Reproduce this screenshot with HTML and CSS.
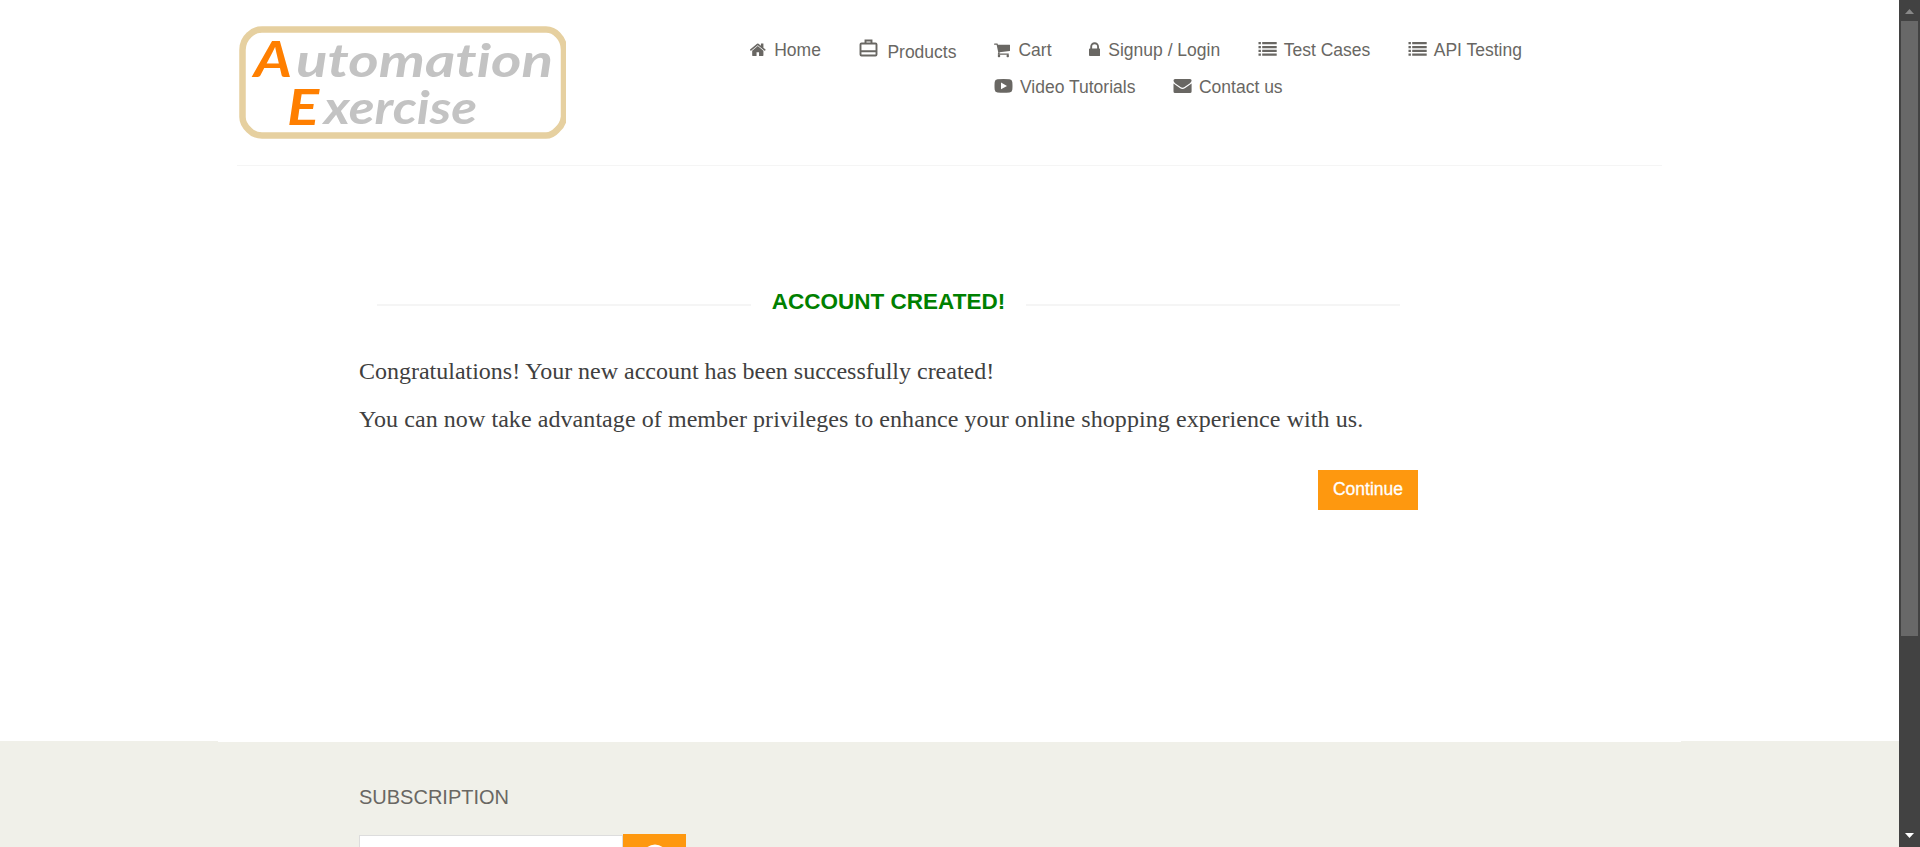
FILE: index.html
```html
<!DOCTYPE html>
<html lang="en">
<head>
<meta charset="utf-8">
<title>Automation Exercise - Account Created</title>
<link rel="stylesheet" href="styles.css">
</head>
<body>
<div class="page">
  <header class="header">
    <svg class="logo" width="329" height="115" viewBox="0 0 329 115" role="img" aria-label="Automation Exercise">
      <path class="logo-frame" d="M25 4.500H309Q316 4.500 321 10Q327 16 327 25V92Q326 100 320 105Q315 110.500 309 110.500H25Q17 110.500 12 105Q5.500 99 5.500 92V25Q5.500 16 12 10Q17 4.500 25 4.500Z"/>
      <text class="logo-cap" x="17" y="52" textLength="38" lengthAdjust="spacingAndGlyphs">A</text>
      <text class="logo-text" x="59" y="52" textLength="257" lengthAdjust="spacingAndGlyphs">utomation</text>
      <text class="logo-cap" x="50" y="100" textLength="32" lengthAdjust="spacingAndGlyphs">E</text>
      <text class="logo-text" x="87" y="99" textLength="153" lengthAdjust="spacingAndGlyphs">xercise</text>
    </svg>
    <nav class="nav">
      <ul class="nav-row">
        <li><svg class="fa home" viewBox="96 0 1600 1792"><path d="M1472 992v480q0 26-19 45t-45 19h-384v-384h-256v384h-384q-26 0-45-19t-19-45v-480q0-1 .5-3t.5-3l575-474 575 474q1 2 1 6zm223-69l-62 74q-8 9-21 11h-3q-13 0-21-7l-692-577-692 577q-12 8-24 7-13-2-21-11l-62-74q-8-10-7-23.500t11-21.500l719-599q32-26 76-26t76 26l244 204v-195q0-14 9-23t23-9h192q14 0 23 9t9 23v408l219 182q10 8 11 21.500t-7 23.500z"/></svg>Home</li>
        <li class="products"><svg class="bag" viewBox="0 0 21 20"><path d="M3.500 5.500h14a1 1 0 0 1 1 1v10a1 1 0 0 1-1 1h-14a1 1 0 0 1-1-1v-10a1 1 0 0 1 1-1zM7.500 5.500v-3h6v3M2.500 13.200h16"/></svg>Products</li>
        <li><svg class="fa cart" viewBox="64 0 1664 1792"><path d="M704 1536q0 52-38 90t-90 38-90-38-38-90 38-90 90-38 90 38 38 90zm896 0q0 52-38 90t-90 38-90-38-38-90 38-90 90-38 90 38 38 90zm128-1088v512q0 24-16.500 42.500t-40.500 21.500l-1044 122q13 60 13 70 0 16-24 64h920q26 0 45 19t19 45-19 45-45 19h-1024q-26 0-45-19t-19-45q0-11 8-31.500t16-36 21.500-40 15.500-29.500l-177-823h-204q-26 0-45-19t-19-45 19-45 45-19h256q16 0 28.500 6.500t19.500 15.500 13 24.500 8 26 5.500 29.500 4.500 26h1201q26 0 45 19t19 45z"/></svg>Cart</li>
        <li><svg class="fa lock" viewBox="320 0 1152 1792"><path d="M640 768h512v-192q0-106-75-181t-181-75-181 75-75 181v192zm832 96v576q0 40-28 68t-68 28h-960q-40 0-68-28t-28-68v-576q0-40 28-68t68-28h32v-192q0-184 132-316t316-132 316 132 132 316v192h32q40 0 68 28t28 68z"/></svg>Signup / Login</li>
        <li><svg class="wide" viewBox="0 0 19 14"><path d="M.5 0h2.400v2.300H.5zM.5 3.900h2.400v2.300H.5zM.5 7.700h2.400v2.300H.5zM.5 11.500h2.400v2.300H.5zM4.200 0H18.700v2.300H4.200zM4.200 3.900H18.700v2.300H4.200zM4.200 7.700H18.700v2.300H4.200zM4.200 11.500H18.700v2.300H4.200z"/></svg>Test Cases</li>
        <li><svg class="wide" viewBox="0 0 19 14"><path d="M.5 0h2.400v2.300H.5zM.5 3.900h2.400v2.300H.5zM.5 7.700h2.400v2.300H.5zM.5 11.500h2.400v2.300H.5zM4.200 0H18.700v2.300H4.200zM4.200 3.900H18.700v2.300H4.200zM4.200 7.700H18.700v2.300H4.200zM4.200 11.500H18.700v2.300H4.200z"/></svg>API Testing</li>
      </ul>
      <ul class="nav-row second">
        <li><svg class="wide" viewBox="0 0 19 14"><path fill-rule="evenodd" d="M3.500.3Q9.500-.2 15.500.3Q18 .5 18.300 3Q18.700 7 18.300 10.800Q18 13.300 15.500 13.500Q9.500 14 3.500 13.500Q1 13.300.7 10.800Q.3 7 .7 3Q1 .5 3.500.3ZM7 3.500V10.200L13 6.900Z"/></svg>Video Tutorials</li>
        <li><svg class="wide" viewBox="0 0 19 14"><path d="M2 0H17Q18.600 0 18.600 1.600Q18.600 3 17 4.200L11.500 8Q9.500 9.300 7.500 8L2 4.200Q.5 3 .5 1.600Q.5 0 2 0ZM.5 4.500L6.800 9Q9.500 10.800 12.200 9L18.600 4.500V12.400Q18.600 14 17 14H2Q.5 14 .5 12.400Z"/></svg>Contact us</li>
      </ul>
    </nav>
  </header>

  <main class="main">
    <h2 class="title"><span class="rule"></span><b>ACCOUNT CREATED!</b><span class="rule"></span></h2>
    <p class="message first">Congratulations! Your new account has been successfully created!</p>
    <p class="message second">You can now take advantage of member privileges to enhance your online shopping experience with us.</p>
    <div class="actions"><a class="continue">Continue</a></div>
  </main>

  <footer class="footer">
    <div class="footer-top"></div>
    <h2 class="subscription">SUBSCRIPTION</h2>
    <div class="form">
      <div class="email"></div>
      <div class="send"><svg viewBox="0 0 30 30"><circle cx="15" cy="15" r="10.500"/><path d="M9 15h11M15 10l5 5-5 5"/></svg></div>
    </div>
  </footer>
</div>
<div class="scrollbar">
  <svg class="arrow up" viewBox="0 0 9 5"><path d="M0 5h9L4.500 0z"/></svg>
  <div class="thumb"></div>
  <svg class="arrow down" viewBox="0 0 9 5"><path d="M0 0h9L4.500 5z"/></svg>
</div>
</body>
</html>
```
FILE: styles.css
```css
* { box-sizing: border-box; }

body {
  margin: 0;
  height: 847px;
  overflow: hidden;
  display: flex;
  background: #fff;
  color: #696763;
  font: 17.5px/20px "Liberation Sans", Arial, sans-serif;
}

.page {
  width: 1899px;
  height: 847px;
  overflow: hidden;
  display: flex;
  flex-direction: column;
}

/* Header */
.header {
  width: 1425px;
  height: 166px;
  margin-left: 237px;
  flex: none;
  display: flex;
  border-bottom: 1px solid #f5f5f5;
}

.logo { margin: 25px 184px 0 0; flex: none; overflow: hidden; }
.logo-frame { fill: none; stroke: #e6d0a0; stroke-width: 6.5; }
.logo-cap, .logo-text {
  font-family: Lato, "Liberation Sans", sans-serif;
  font-style: italic;
  font-weight: 700;
  font-variant-ligatures: none;
}
.logo-cap { font-size: 50px; fill: #ff7f00; }
.logo-text { font-size: 45px; fill: #c3c3c3; }

.nav { padding-top: 40px; }
.nav-row {
  display: flex;
  gap: 37.5px;
  margin: 0;
  padding: 0;
  list-style: none;
  white-space: nowrap;
}
.nav-row.second { margin-top: 15px; padding-left: 244px; }
.nav-row svg { fill: #696763; }
.products { padding-top: 2px; }

.fa { height: 17.5px; vertical-align: -2.5px; margin-right: 8px; }
.home { width: 15.6px; margin-right: 8.6px; }
.cart { width: 16.25px; margin-right: 8.3px; }
.lock { width: 11.25px; margin-right: 8px; }
.wide { width: 19px; height: 14px; vertical-align: 0; margin-right: 7px; }
.nav-row .bag {
  width: 21px;
  height: 20px;
  vertical-align: 0;
  margin: -4px 8px 0 0;
  fill: none;
  stroke: #696763;
  stroke-width: 1.9;
}

/* Message */
.main {
  width: 1059px;
  height: 575px;
  flex: none;
  margin-left: 359px;
  padding-top: 122px;
}
.title {
  display: flex;
  width: 1023px;
  margin: 0 0 0 18px;
  color: green;
  font-size: 22.5px;
  line-height: 28px;
  justify-content: space-between;
}
.rule { width: 374px; height: 2px; margin-top: 16px; background: #f5f5f5; }

.message {
  margin: 0;
  color: #404040;
  font: 24px/28px "Liberation Serif", serif;
  white-space: nowrap;
}
.message.first { margin-top: 41px; letter-spacing: -0.01px; }
.message.second { margin-top: 20px; letter-spacing: 0.07px; }

.actions { display: flex; justify-content: flex-end; margin-top: 37px; }
.continue {
  width: 100px;
  height: 40px;
  padding-top: 9px;
  background: #fe980f;
  color: #fff;
  text-align: center;
  -webkit-text-stroke: 0.3px #fff;
}

/* Footer */
.footer { flex: 1; background: #f0f0e9; }
.footer-top { width: 1463px; height: 1px; margin-left: 218px; background: #fff; }
.subscription {
  margin: 44px 0 0 359px;
  font-size: 20px;
  font-weight: 400;
  line-height: 22px;
}
.form { display: flex; margin: 26px 0 0 359px; }
.email {
  width: 264px;
  height: 43px;
  margin-top: 1px;
  background: #fff;
  border: 1px solid #ddd;
}
.send { width: 63px; height: 43px; padding: 8px 0 0 16.5px; background: #fe980f; }
.send svg { display: block; width: 30px; height: 30px; fill: none; stroke: #fff; stroke-width: 4; }

/* Scrollbar */
.scrollbar {
  width: 21px;
  height: 847px;
  flex: none;
  display: flex;
  flex-direction: column;
  align-items: center;
  background: #424242;
}
.thumb { width: 17px; height: 615px; margin-top: 7px; background: #686868; }
.arrow { width: 9px; height: 5px; flex: none; }
.up { margin-top: 9px; fill: #888; }
.down { margin-top: 197px; fill: #fff; }
```
